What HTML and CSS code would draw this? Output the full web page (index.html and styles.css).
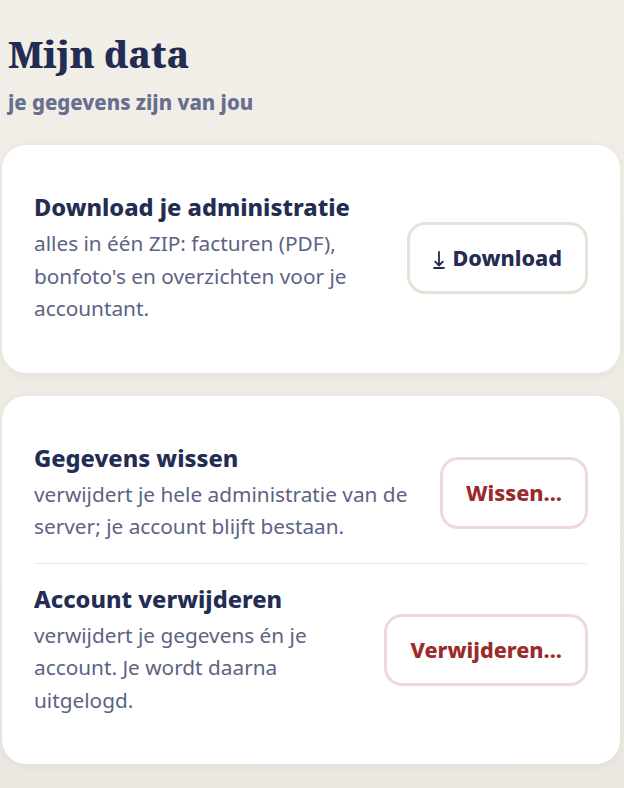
FILE: index.html
```html
<!DOCTYPE html>
<html lang="nl">
<head>
<meta charset="utf-8">
<title>Mijn data</title>
<link rel="stylesheet" href="styles.css">
</head>
<body>
<main class="page">
  <header class="page-head">
    <h1 class="page-title">Mijn data</h1>
    <p class="page-sub">je gegevens zijn van jou</p>
  </header>

  <section class="card">
    <div class="row">
      <div class="row-text">
        <h2 class="row-title">Download je administratie</h2>
        <p class="row-desc">alles in één ZIP: facturen (PDF), bonfoto's en overzichten voor je accountant.</p>
      </div>
      <button class="btn btn-neutral" type="button"><svg class="dl-icon" viewBox="0 0 12 20" width="12" height="20" aria-hidden="true"><path d="M6 3V16.5M2.2 12.6L6 16.5L9.8 12.6M1 19H11" fill="none" stroke="currentColor" stroke-width="1.8" stroke-linecap="round" stroke-linejoin="round"/></svg>Download</button>
    </div>
  </section>

  <section class="card">
    <div class="row">
      <div class="row-text">
        <h2 class="row-title">Gegevens wissen</h2>
        <p class="row-desc">verwijdert je hele administratie van de server; je account blijft bestaan.</p>
      </div>
      <button class="btn btn-danger" type="button">Wissen...</button>
    </div>
    <div class="row">
      <div class="row-text">
        <h2 class="row-title">Account verwijderen</h2>
        <p class="row-desc">verwijdert je gegevens én je account. Je wordt daarna uitgelogd.</p>
      </div>
      <button class="btn btn-danger" type="button">Verwijderen...</button>
    </div>
  </section>
</main>
</body>
</html>
```
FILE: styles.css
```css
html, body {
  margin: 0;
  padding: 0;
}
body {
  background: linear-gradient(#f2efe8, #ebe8e2);
  min-height: 788px;
  font-family: "Noto Sans", "Open Sans", sans-serif;
  color: #232c52;
}
.page {
  padding: 32px 4px 20px 2px;
  display: flex;
  flex-direction: column;
  gap: 23px;
}
.page-head {
  padding-left: 6px;
  margin-bottom: 8px;
}
.page-title {
  margin: 0;
  font-family: "Noto Serif", "DejaVu Serif", serif;
  font-weight: 800;
  font-size: 37px;
  line-height: 44px;
  color: #232c52;
  letter-spacing: -0.2px;
}
.page-sub {
  margin: 14px 0 0;
  font-weight: 800;
  font-size: 20.4px;
  line-height: 24px;
  color: #676e8e;
}
.card {
  background: #ffffff;
  border-radius: 24px;
  padding: 47px 32px 48px;
  box-shadow: 0 2px 10px rgba(60, 50, 30, 0.06);
  display: flex;
  flex-direction: column;
}
.row {
  display: flex;
  align-items: center;
  gap: 24px;
}
.row + .row {
  border-top: 1px solid #efece6;
  margin-top: 20px;
  padding-top: 20px;
}
.row-text {
  flex: 1 1 auto;
  min-width: 0;
}
.row-title {
  margin: 0;
  font-size: 23.6px;
  line-height: 30px;
  font-weight: 800;
  color: #232c52;
}
.row-desc {
  margin: 5px 0 0;
  font-size: 20.8px;
  line-height: 32.5px;
  font-weight: 400;
  color: #5c6384;
}
.btn {
  flex: 0 0 auto;
  display: inline-flex;
  align-items: center;
  gap: 8px;
  background: #ffffff;
  border: 3px solid #e5e2d7;
  border-radius: 18px;
  padding: 20px 23px;
  font-family: inherit;
  font-size: 21.6px;
  line-height: 26px;
  font-weight: 800;
  color: #232c52;
  cursor: pointer;
}
.btn-danger {
  border-color: #eedada;
  color: #9b2b2b;
}
.dl-icon {
  display: block;
  margin-top: 2px;
}
```
